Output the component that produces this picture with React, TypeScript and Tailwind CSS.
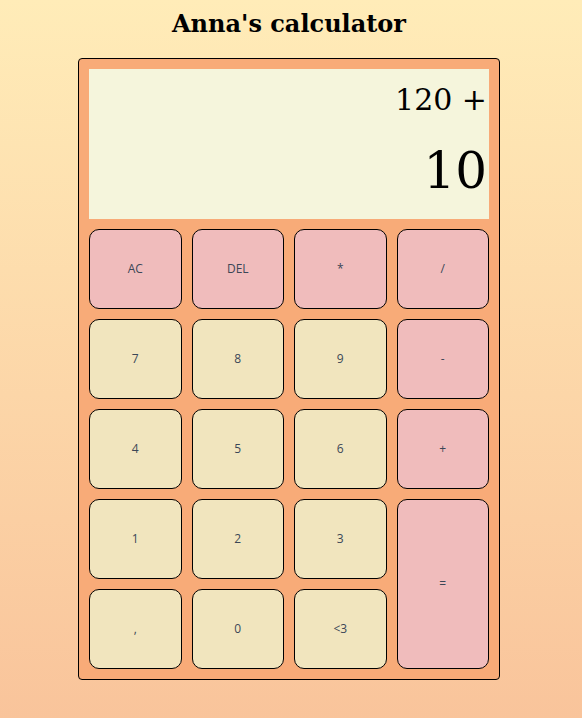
const keys: { label: string; op?: boolean; tall?: boolean }[] = [
  { label: "AC", op: true },
  { label: "DEL", op: true },
  { label: "*", op: true },
  { label: "/", op: true },
  { label: "7" },
  { label: "8" },
  { label: "9" },
  { label: "-", op: true },
  { label: "4" },
  { label: "5" },
  { label: "6" },
  { label: "+", op: true },
  { label: "1" },
  { label: "2" },
  { label: "3" },
  { label: "=", op: true, tall: true },
  { label: "," },
  { label: "0" },
  { label: "<3" },
];

export default function App() {
  return (
    <div className="min-h-screen bg-gradient-to-b from-[#ffecb8] to-[#f9c49b] flex flex-col items-center pr-[4px] font-['DejaVu_Serif',serif]">
      {/* titulo */}
      <h1 className="pt-[10px] text-[24px] leading-[28px] font-bold text-black">Anna's calculator</h1>

      <div className="mt-[20px] w-[422px] rounded-[4px] border border-black bg-[#f8ab78] p-[10px]">
        {/* pantalla */}
        <div className="h-[150px] bg-[#f5f5dc] flex flex-col items-end pr-[2px] text-black">
          <div className="mt-[13px] text-[30px] leading-[36px]">120 +</div>
          <div className="mt-[24px] text-[50px] leading-[58px]">10</div>
        </div>

        {/* teclado */}
        <div className="mt-[10px] grid grid-cols-4 auto-rows-[80px] gap-[10px]">
          {keys.map((k) => (
            <button
              key={k.label}
              className={
                "rounded-[10px] border border-black text-[12px] text-[#3b4757] font-['Open_Sans',sans-serif] flex items-center justify-center " +
                (k.op ? "bg-[#f0bcbc]" : "bg-[#f1e5be]") +
                (k.tall ? " row-span-2" : "")
              }
            >
              {k.label}
            </button>
          ))}
        </div>
      </div>
    </div>
  );
}
